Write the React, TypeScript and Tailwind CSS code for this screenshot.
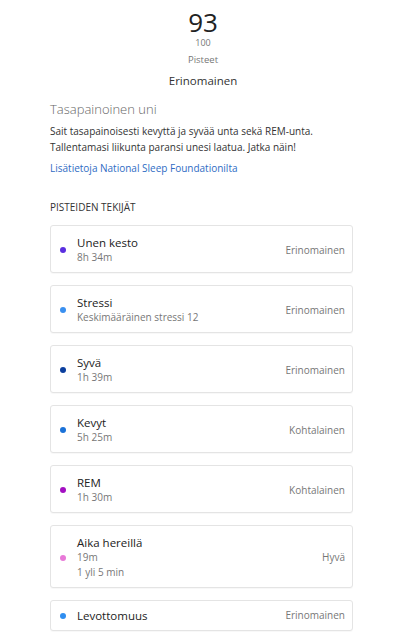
import React from "react";

type Factor = {
  title: string;
  lines: string[];
  rating: string;
  color: string;
};

const factors: Factor[] = [
  { title: "Unen kesto", lines: ["8h 34m"], rating: "Erinomainen", color: "bg-[#5a2ee0]" },
  { title: "Stressi", lines: ["Keskimääräinen stressi 12"], rating: "Erinomainen", color: "bg-[#3a90f0]" },
  { title: "Syvä", lines: ["1h 39m"], rating: "Erinomainen", color: "bg-[#0b3f9e]" },
  { title: "Kevyt", lines: ["5h 25m"], rating: "Kohtalainen", color: "bg-[#1b72d8]" },
  { title: "REM", lines: ["1h 30m"], rating: "Kohtalainen", color: "bg-[#a310c2]" },
  { title: "Aika hereillä", lines: ["19m", "1 yli 5 min"], rating: "Hyvä", color: "bg-[#e879d8]" },
  { title: "Levottomuus", lines: [], rating: "Erinomainen", color: "bg-[#2f8ef0]" },
];

function FactorCard({ f }: { f: Factor }) {
  const single = f.lines.length === 0;
  return (
    <div
      className={`flex items-center rounded-[3px] border border-[#e4e4e4] bg-white pl-[9px] pr-[7px] shadow-[0_1px_1px_rgba(0,0,0,0.03)] ${
        single ? "py-[7px]" : "pt-[9px] pb-[7px]"
      }`}
    >
      <span className={`h-[6px] w-[6px] shrink-0 rounded-full ${f.color}`} />
      <div className="ml-[11px] flex-1">
        <div className="text-[11.5px] leading-[15px] text-[#222]">{f.title}</div>
        {f.lines.map((l) => (
          <div key={l} className="text-[10px] leading-[15px] text-[#777]">
            {l}
          </div>
        ))}
      </div>
      <div className="text-[10px] leading-[15px] text-[#777]">{f.rating}</div>
    </div>
  );
}

export default function App() {
  return (
    <div className="min-h-[639px] w-full bg-white font-['Open_Sans',sans-serif]">
      <div className="flex flex-col items-center pt-[7px]">
        <div className="text-[26px] leading-[30px] text-[#222]">93</div>
        <div className="text-[9px] leading-[12px] text-[#777]">100</div>
        <div className="mt-[4px] text-[9.5px] leading-[13px] text-[#777]">Pisteet</div>
        <div className="mt-[7px] text-[11.5px] leading-[16px] text-[#333]">Erinomainen</div>
      </div>

      <div className="ml-[50px] w-[303px]">
        <h2 className="mt-[10px] text-[13px] font-light leading-[20px] text-[#666]">
          Tasapainoinen uni
        </h2>
        <p className="mt-[4px] text-[10px] leading-[16px] text-[#333]">
          Sait tasapainoisesti kevyttä ja syvää unta sekä REM-unta.
          <br />
          Tallentamasi liikunta paransi unesi laatua. Jatka näin!
        </p>
        <a className="mt-[5px] block text-[10px] leading-[16px] text-[#2f6cc4]">
          Lisätietoja National Sleep Foundationilta
        </a>

        <h3 className="mt-[24px] text-[10px] leading-[14px] text-[#333]">PISTEIDEN TEKIJÄT</h3>

        <div className="mt-[11px] flex flex-col gap-3 pb-4">
          {factors.map((f) => (
            <FactorCard key={f.title} f={f} />
          ))}
        </div>
      </div>
    </div>
  );
}
